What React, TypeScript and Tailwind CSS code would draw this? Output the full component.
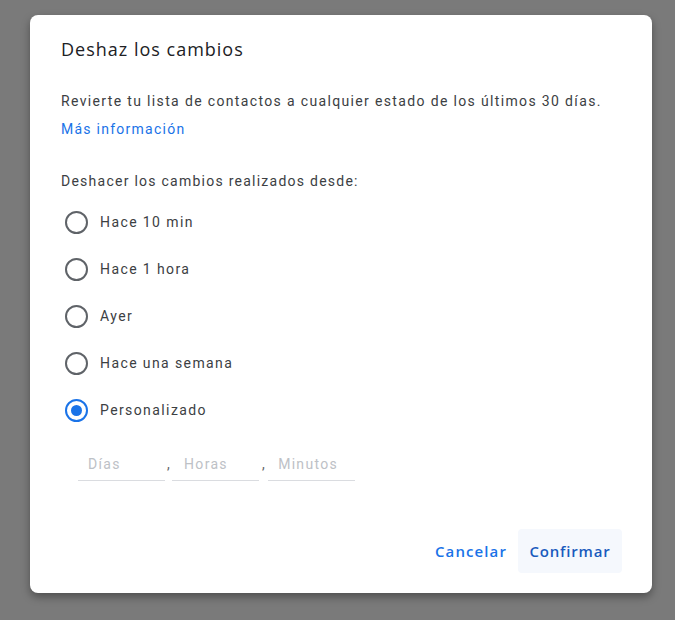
import { useState } from 'react';

const options = ['Hace 10 min', 'Hace 1 hora', 'Ayer', 'Hace una semana', 'Personalizado'];

function Radio({ checked }: { checked: boolean }) {
  return (
    <span
      className={`flex h-[23px] w-[23px] shrink-0 items-center justify-center rounded-full border-2 ${
        checked ? 'border-[#1a73e8]' : 'border-[#5f6368]'
      }`}
    >
      {checked && <span className="h-[11px] w-[11px] rounded-full bg-[#1a73e8]" />}
    </span>
  );
}

export default function App() {
  const [selected, setSelected] = useState('Personalizado');

  return (
    <div className="h-[620px] w-[675px] bg-[#7a7a7a] pt-[15px] pl-[30px] font-['Roboto',sans-serif]">
      <div className="flex h-[578px] w-[622px] flex-col rounded-lg bg-white px-[31px] shadow-[0_4px_8px_rgba(0,0,0,0.35)]">
        <h2 className="mt-[22px] font-['Open_Sans',sans-serif] text-[18px] leading-6 tracking-[1px] text-[#202124]">
          Deshaz los cambios
        </h2>

        <p className="mt-[30px] text-[14px] leading-5 tracking-[1.35px] text-[#3c4043]">
          Revierte tu lista de contactos a cualquier estado de los últimos 30 días.
        </p>
        <a className="mt-[8px] text-[14px] leading-5 tracking-[1.25px] text-[#1a73e8]">Más información</a>

        <p className="mt-[32px] text-[14px] leading-5 tracking-[1.25px] text-[#3c4043]">
          Deshacer los cambios realizados desde:
        </p>

        <div className="mt-[8px] ml-[4px] flex flex-col">
          {options.map((opt) => (
            <label
              key={opt}
              className="flex h-[47px] cursor-pointer items-center gap-[12px]"
              onClick={() => setSelected(opt)}
            >
              <Radio checked={selected === opt} />
              <span className="text-[14px] tracking-[1.4px] text-[#3c4043]">{opt}</span>
            </label>
          ))}
        </div>

        <div className="mt-[20px] ml-[17px] flex items-end text-[14px] tracking-[1.3px]">
          <input
            placeholder="Días"
            className="w-[87px] border-b border-[#dadce0] pb-[5px] pl-[10px] text-[#3c4043] outline-none placeholder:text-[#bdc1c6]"
          />
          <span className="mr-[1px] ml-[2px] pb-[6px] text-[#5f6368]">,</span>
          <input
            placeholder="Horas"
            className="w-[87px] border-b border-[#dadce0] pb-[5px] pl-[12px] text-[#3c4043] outline-none placeholder:text-[#bdc1c6]"
          />
          <span className="mr-[2px] ml-[3px] pb-[6px] text-[#5f6368]">,</span>
          <input
            placeholder="Minutos"
            className="w-[87px] border-b border-[#dadce0] pb-[5px] pl-[10px] text-[#3c4043] outline-none placeholder:text-[#bdc1c6]"
          />
        </div>

        <div className="mt-auto mb-[20px] -mr-[1px] flex justify-end gap-[10px]">
          <button className="h-[44px] rounded px-[1px] font-['Open_Sans',sans-serif] text-[15px] font-semibold tracking-[1.1px] text-[#1a73e8]">
            Cancelar
          </button>
          <button className="h-[44px] w-[104px] rounded bg-[#f5f8fd] font-['Open_Sans',sans-serif] text-[15px] font-semibold tracking-[0.8px] text-[#1a5bbd]">
            Confirmar
          </button>
        </div>
      </div>
    </div>
  );
}
